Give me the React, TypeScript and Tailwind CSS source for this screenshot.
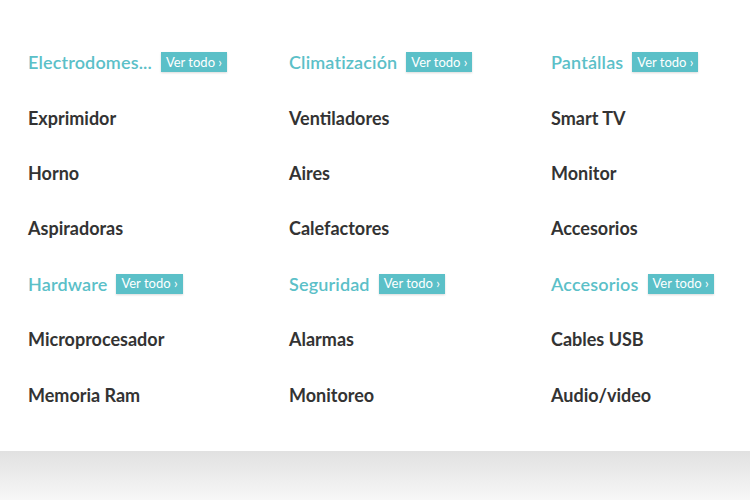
const sections = [
  [
    { title: "Electrodomes...", items: ["Exprimidor", "Horno", "Aspiradoras"] },
    { title: "Climatización", items: ["Ventiladores", "Aires", "Calefactores"] },
    { title: "Pantállas", items: ["Smart TV", "Monitor", "Accesorios"] },
  ],
  [
    { title: "Hardware", items: ["Microprocesador", "Memoria Ram"] },
    { title: "Seguridad", items: ["Alarmas", "Monitoreo"] },
    { title: "Accesorios", items: ["Cables USB", "Audio/video"] },
  ],
];

function Category({
  title,
  items,
  first,
}: {
  title: string;
  items: string[];
  first: boolean;
}) {
  return (
    <div>
      <div className={`flex items-center ${first ? "h-[58px]" : "h-[55px]"}`}>
        <h3 className="text-[18px] font-semibold tracking-[0.15px] text-[#5bc0c8] leading-none">
          {title}
        </h3>
        <a
          href="#"
          className="ml-[9px] h-[20px] px-[5px] flex items-center bg-[#5bc0c8] text-white text-[13px] leading-none shadow-[0_1px_2px_rgba(0,0,0,0.15)]"
        >
          Ver todo ›
        </a>
      </div>
      {items.map((item) => (
        <div
          key={item}
          className={`flex items-center ${first ? "h-[55px]" : "h-[56px]"} text-[18px] font-bold text-[#333333]`}
        >
          {item}
        </div>
      ))}
    </div>
  );
}

export default function App() {
  return (
    <div
      className="w-[750px] h-[500px] flex flex-col bg-white"
      style={{ fontFamily: "Lato, 'Open Sans', sans-serif" }}
    >
      <div className="h-[451px] pt-[33px] pl-[28px]">
        {sections.map((row, i) => (
          <div key={i} className="grid grid-cols-[261px_262px_1fr]">
            {row.map((cat) => (
              <Category
                key={cat.title}
                title={cat.title}
                items={cat.items}
                first={i === 0}
              />
            ))}
          </div>
        ))}
      </div>
      <div className="flex-1 bg-gradient-to-b from-[#e1e1e1] to-[#f7f7f7]" />
    </div>
  );
}
